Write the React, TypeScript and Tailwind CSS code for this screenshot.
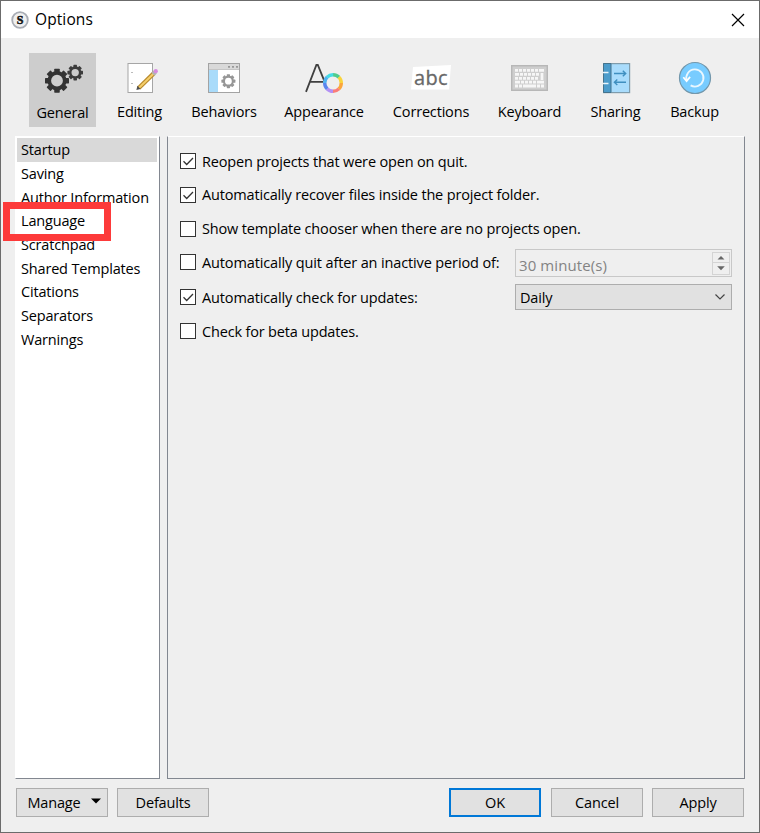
import { useState } from 'react';
import type { ReactNode } from 'react';
import clsx from 'clsx';

/* ─── Toolbar icons ─── */

function Gear({ cx, cy, r, hole, color }: { cx: number; cy: number; r: number; hole: number; color: string }) {
  const body = r * 0.8;
  const tooth = r * 0.46;
  return (
    <g fill={color}>
      <circle cx={cx} cy={cy} r={(body + hole) / 2} fill="none" stroke={color} strokeWidth={body - hole} />
      {[0, 45, 90, 135, 180, 225, 270, 315].map(a => (
        <rect key={a} x={cx - tooth / 2} y={cy - r} width={tooth} height={r * 0.3} rx="0.6" transform={`rotate(${a} ${cx} ${cy})`} />
      ))}
    </g>
  );
}

const GeneralIcon = () => (
  <svg width="47" height="44" viewBox="0 0 47 44">
    <Gear cx={18} cy={24.7} r={12} hole={5.9} color="#333" />
    <Gear cx={36.2} cy={16.6} r={7.8} hole={3.7} color="#3c3c3c" />
  </svg>
);

const EditingIcon = () => (
  <svg width="47" height="44" viewBox="0 0 47 44">
    <rect x="12" y="7.5" width="24.5" height="29" fill="#fff" stroke="#a6a6a6" />
    <path d="M15 16.5h2M15 27.5h2" stroke="#bbb" />
    <path d="M22.8 32 38 17.2" stroke="#b98a2c" strokeWidth="4.4" />
    <path d="M22.8 32 38 17.2" stroke="#f5cf6b" strokeWidth="2" />
    <path d="m20.4 34 1-4.2 3.2 3.2z" fill="#4d4d4d" />
    <path d="m37 18.2 2.4-2.4" stroke="#b3b3b3" strokeWidth="4.4" />
    <circle cx="39.8" cy="15.2" r="2.1" fill="#d68ae0" />
  </svg>
);

const BehaviorsIcon = () => (
  <svg width="48" height="44" viewBox="0 0 48 44">
    <rect x="8.5" y="7.5" width="31" height="29" fill="#fff" stroke="#a3a3a3" />
    <rect x="9" y="8" width="30" height="5.5" fill="#d9d9d9" />
    <path d="M9 13.5h30" stroke="#b5b5b5" strokeWidth=".7" />
    <rect x="9" y="14" width="9" height="22" fill="#a9dbfa" />
    <path d="M28 10.8h2M32 10.8h2M36 10.8h2" stroke="#999" strokeWidth="1.7" />
    <Gear cx={28.4} cy={25.2} r={7} hole={3.4} color="#969696" />
  </svg>
);

const ringColors = ['#50cc8c', '#f9d43c', '#fba63c', '#fa7d78', '#b391f5', '#5b86ee', '#50b4f2', '#45dce5'];

const AppearanceIcon = () => (
  <svg width="48" height="44" viewBox="0 0 48 44" fill="none">
    <path d="M6 35.8 16.4 9h1.4l6.4 15.6M10 25.9h13.4" stroke="#404040" strokeWidth="1.8" />
    {ringColors.map((color, i) => (
      <circle
        key={color}
        cx="33"
        cy="27"
        r="8.3"
        stroke={color}
        strokeWidth="3.4"
        pathLength="8"
        strokeDasharray="1.03 6.97"
        transform={`rotate(${i * 45 - 90} 33 27)`}
      />
    ))}
  </svg>
);

const CorrectionsIcon = () => (
  <svg width="48" height="44" viewBox="0 0 48 44">
    <path d="m6 11 38-2-2 24.6H4z" fill="#fff" />
    <text x="7" y="29" fontSize="20" fill="#686868" stroke="#686868" strokeWidth=".3" textLength="33.5" className="font-['Open_Sans',sans-serif] tracking-normal">
      abc
    </text>
  </svg>
);

const KeyboardIcon = () => (
  <svg width="47" height="44" viewBox="0 0 47 44">
    <rect x="5.7" y="9.7" width="35.6" height="24.6" fill="#cecece" stroke="#b7b7b7" strokeWidth="1.4" />
    <g stroke="#f6f6f6" strokeWidth="2.8">
      <path d="M9 14.3h3M13 14.3h3M17 14.3h3M21 14.3h3M25 14.3h3M29 14.3h3M33 14.3h5" />
      <path d="M9 18.4h4M14 18.4h3M18 18.4h3M22 18.4h3M26 18.4h3M30 18.4h3" />
      <path d="M9 22.3h3M13 22.3h3M17 22.3h3M21 22.3h3M25 22.3h3M29 22.3h3" />
      <path d="M9 26.1h5M15 26.1h3M19 26.1h3M23 26.1h3M27 26.1h3M31 26.1h7" />
      <path d="M9 30h3M13 30h3M17 30h13M31 30h3M35 30h3" />
      <path d="M36 17v7" />
    </g>
  </svg>
);

const SharingIcon = () => (
  <svg width="47" height="44" viewBox="0 0 47 44" fill="none">
    <rect x="11.6" y="7.6" width="26" height="29" fill="#a9dcfc" stroke="#7f9cac" strokeWidth="1.2" />
    <path d="M11.5 7.5H19v29h-7.5z" fill="#4c9ccb" stroke="#45738c" strokeWidth="1" />
    <path d="M11 16.5h5.5M11 27.5h5.5" stroke="#e8f4fa" strokeWidth="1.5" />
    <path d="M22 17.5h11.5M30.8 14.8l2.9 2.7-2.9 2.7M34 26.3H22.5M25.3 23.6l-2.9 2.7 2.9 2.7" stroke="#3f8fc0" strokeWidth="1.4" />
  </svg>
);

const BackupIcon = () => (
  <svg width="47" height="44" viewBox="0 0 47 44" fill="none">
    <circle cx="24" cy="22" r="15.5" fill="#78ccff" stroke="#7397ab" strokeWidth="1.2" />
    <path d="M15.7 24.5A8.6 8.6 0 1 1 19.6 29.4" stroke="#e9f7ff" strokeWidth="1.8" />
    <path d="m12.3 21.2 3.3 3.9 3.5-4.2" stroke="#fff" strokeWidth="1.7" />
  </svg>
);

/* ─── Data ─── */

const tabs = [
  { label: 'General', width: 'w-[67px]', icon: <GeneralIcon /> },
  { label: 'Editing', width: 'w-[69px]', icon: <EditingIcon /> },
  { label: 'Behaviors', width: 'w-[82px]', icon: <BehaviorsIcon /> },
  { label: 'Appearance', width: 'w-[100px]', icon: <AppearanceIcon /> },
  { label: 'Corrections', width: 'w-[96px]', icon: <CorrectionsIcon /> },
  { label: 'Keyboard', width: 'w-[83px]', icon: <KeyboardIcon /> },
  { label: 'Sharing', width: 'w-[71px]', icon: <SharingIcon /> },
  { label: 'Backup', width: 'w-[69px]', icon: <BackupIcon /> },
];

const sections = ['Startup', 'Saving', 'Author Information', 'Language', 'Scratchpad', 'Shared Templates', 'Citations', 'Separators', 'Warnings'];

/* ─── Controls ─── */

type CheckRowProps = {
  label: string;
  initial?: boolean;
  className?: string;
  labelClassName?: string;
  children?: ReactNode;
};

function CheckRow({ label, initial = false, className, labelClassName, children }: CheckRowProps) {
  const [checked, setChecked] = useState(initial);
  return (
    <div className="flex h-[34px] items-center justify-between">
      <button
        type="button"
        role="checkbox"
        aria-checked={checked}
        onClick={() => setChecked(!checked)}
        className={clsx('flex items-center gap-1.5 whitespace-nowrap', className)}
      >
        <span className="size-4 border border-[#333] bg-white">
          {checked && (
            <svg width="14" height="14" viewBox="0 0 14 14" fill="none">
              <path d="m2.5 7.3 3.2 3.2L12 4" stroke="#333" strokeWidth="1.3" />
            </svg>
          )}
        </span>
        <span className={labelClassName}>{label}</span>
      </button>
      {children}
    </div>
  );
}

function PushButton({ children, primary = false }: { children: ReactNode; primary?: boolean }) {
  return (
    <button
      type="button"
      className={clsx(
        'flex h-[29px] w-[92px] items-center justify-center bg-[#e1e1e1]',
        primary ? 'border-2 border-[#0078d7]' : 'border border-[#adadad]'
      )}
    >
      {children}
    </button>
  );
}

export default function App() {
  const [activeTab, setActiveTab] = useState('General');
  const [section, setSection] = useState('Startup');

  return (
    <div className="relative flex h-[833px] w-[760px] flex-col border border-[#6b6b6b] bg-[#efefef] font-['Open_Sans','Noto_Sans',sans-serif] text-[14.5px] leading-5 tracking-[-0.17px] text-black">
      {/* Title bar */}
      <header className="flex h-[37px] shrink-0 items-center justify-between bg-white pr-3.5 pl-2.5">
        <div className="flex items-center gap-1.5">
          <svg width="18" height="18" viewBox="0 0 18 18">
            <circle cx="9" cy="9" r="7.8" fill="#f0f0f0" stroke="#a9adb5" strokeWidth="1.8" />
            <text x="9" y="13" fontSize="12" fontWeight="700" textAnchor="middle" fill="#111" stroke="#111" strokeWidth=".5" className="font-['Liberation_Serif',serif]">
              S
            </text>
          </svg>
          <span className="mb-0.5 text-[15.5px] tracking-[0.1px]">Options</span>
        </div>
        <svg width="14" height="14" viewBox="0 0 14 14" stroke="#000" strokeWidth="1.2">
          <path d="m1 1 12 12M13 1 1 13" />
        </svg>
      </header>

      {/* Toolbar */}
      <nav className="flex h-[98px] shrink-0 gap-[9px] pt-[15px] pl-7">
        {tabs.map(tab => (
          <button
            key={tab.label}
            type="button"
            onClick={() => setActiveTab(tab.label)}
            className={clsx('flex h-[74px] flex-col items-center pt-[3px]', tab.width, tab.label === activeTab && 'bg-[#cdcdcd]')}
          >
            {tab.icon}
            <span className={tab.label === activeTab ? 'mt-[3px]' : 'mt-0.5'}>{tab.label}</span>
          </button>
        ))}
      </nav>

      {/* Section list and settings */}
      <main className="flex h-[643px] shrink-0 gap-[7px] pl-3.5">
        <ul className="w-[145px] border border-t-white border-r-[#828790] border-b-[#828790] border-l-white bg-white pt-px pr-0.5 pl-px">
          {sections.map(name => (
            <li key={name} onClick={() => setSection(name)} className={clsx('flex h-[23.7px] items-center pt-px pl-1 whitespace-nowrap', name === section && 'bg-[#d9d9d9]')}>
              {name}
            </li>
          ))}
        </ul>

        <section className="w-[578px] border border-[#828790] border-t-white pt-[7px] pr-3 pl-3">
          <CheckRow label="Reopen projects that were open on quit." labelClassName="pt-0.5" initial />
          <CheckRow label="Automatically recover files inside the project folder." initial />
          <CheckRow label="Show template chooser when there are no projects open." />
          <CheckRow label="Automatically quit after an inactive period of:" className="pb-0.5" labelClassName="pt-0.5 tracking-[-0.13px]">
            <div className="flex h-7 w-[217px] items-center justify-between border border-[#c8c8c8] pr-px pl-[3px] text-[#838383]">
              <span className="mt-1 text-[15px] tracking-[0.1px]">30 minute(s)</span>
              <span className="flex h-[23px] w-[18px] flex-col divide-y divide-[#d4d4d4] border border-[#d4d4d4]">
                <svg width="16" height="11" viewBox="0 0 16 11">
                  <path d="m4 7.5 4-4 4 4z" fill="#666" />
                </svg>
                <svg width="16" height="11" viewBox="0 0 16 11">
                  <path d="m4 3.5 4 4 4-4z" fill="#666" />
                </svg>
              </span>
            </div>
          </CheckRow>
          <CheckRow label="Automatically check for updates:" labelClassName="pt-0.5 tracking-[-0.13px]" initial>
            <button type="button" className="flex h-[26px] w-[217px] items-center justify-between border border-[#adadad] bg-[#e1e1e1] pr-1.5 pl-1">
              <span className="pt-0.5">Daily</span>
              <svg width="10" height="6" viewBox="0 0 10 6" fill="none">
                <path d="M.5.5 5 5 9.5.5" stroke="#444" strokeWidth="1.2" />
              </svg>
            </button>
          </CheckRow>
          <CheckRow label="Check for beta updates." labelClassName="pt-0.5" />
        </section>
      </main>

      {/* Dialog buttons */}
      <footer className="flex justify-between pt-[9px] pr-[15px] pl-[15px]">
        <div className="flex gap-[9px]">
          <PushButton>
            <span className="mr-2.5 ml-1">Manage</span>
            <svg width="10" height="6" viewBox="0 0 10 6" className="mb-1">
              <path d="M0 .5h10L5 5.5z" />
            </svg>
          </PushButton>
          <PushButton>Defaults</PushButton>
        </div>
        <div className="flex gap-[9px]">
          <div className="mr-px">
            <PushButton primary>OK</PushButton>
          </div>
          <PushButton>Cancel</PushButton>
          <PushButton>Apply</PushButton>
        </div>
      </footer>

      {/* Highlight around the Language entry */}
      <div className="pointer-events-none absolute top-[201px] left-[2px] h-[39px] w-[108px] border-[7px] border-[#fd3a3a]" />
    </div>
  );
}
